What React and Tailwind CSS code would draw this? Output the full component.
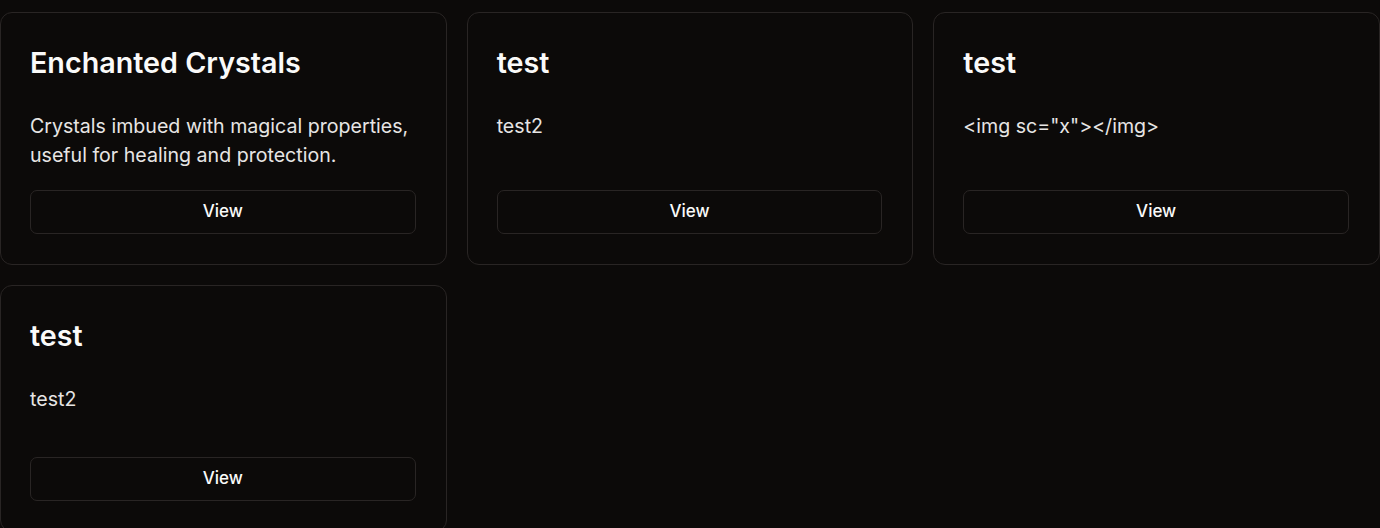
const items = [
  {
    title: "Enchanted Crystals",
    description: "Crystals imbued with magical properties, useful for healing and protection."
  },
  { title: "test", description: "test2" },
  { title: "test", description: '<img sc="x"></img>' },
  { title: "test", description: "test2" }
];

function ItemCard({ item }) {
  return (
    <article className="flex h-full flex-col rounded-[12px] border border-[#292524] bg-[#0c0a09] pb-[30px] pl-[29px] pr-[30px] pt-[31px]">
      <h3 className="text-[28.7px] font-semibold leading-[37px] text-[#fafaf9]">{item.title}</h3>
      <p className="mt-[31px] min-h-[52px] text-[19.6px] leading-[29px] text-[#e7e5e4]">{item.description}</p>
      <div className="mt-auto pt-5">
        <button
          className="flex h-[44px] w-full items-center justify-center rounded-[7px] border border-[#292524] text-[17px] font-medium text-[#fafaf9]"
          type="button"
        >
          View
        </button>
      </div>
    </article>
  );
}

export default function App() {
  return (
    <div className="min-h-screen bg-[#0c0a09] pt-3 font-['Inter',sans-serif]">
      <section className="grid grid-cols-3 gap-5">
        {items.map((item, i) => (
          <div className="flex flex-col" key={i}>
            <ItemCard item={item} />
          </div>
        ))}
      </section>
    </div>
  );
}
